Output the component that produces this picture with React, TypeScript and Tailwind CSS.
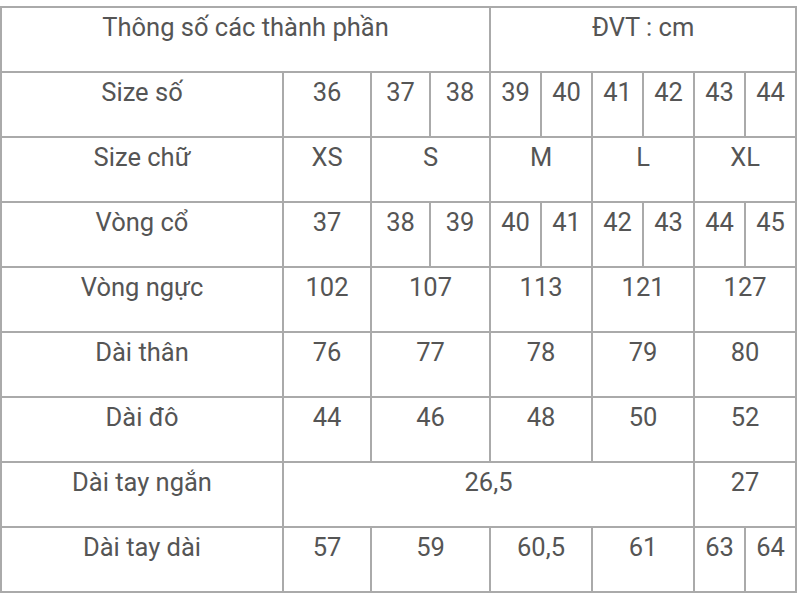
const cell =
  "border-2 border-[#aaaaaa] align-top pt-[1px] text-center leading-[36px] font-normal";

type Cell = [string, number];

const rows: { label: string; cells: Cell[] }[] = [
  {
    label: "Size số",
    cells: [["36", 1], ["37", 1], ["38", 1], ["39", 1], ["40", 1], ["41", 1], ["42", 1], ["43", 1], ["44", 1]],
  },
  { label: "Size chữ", cells: [["XS", 1], ["S", 2], ["M", 2], ["L", 2], ["XL", 2]] },
  {
    label: "Vòng cổ",
    cells: [["37", 1], ["38", 1], ["39", 1], ["40", 1], ["41", 1], ["42", 1], ["43", 1], ["44", 1], ["45", 1]],
  },
  { label: "Vòng ngực", cells: [["102", 1], ["107", 2], ["113", 2], ["121", 2], ["127", 2]] },
  { label: "Dài thân", cells: [["76", 1], ["77", 2], ["78", 2], ["79", 2], ["80", 2]] },
  { label: "Dài đô", cells: [["44", 1], ["46", 2], ["48", 2], ["50", 2], ["52", 2]] },
  { label: "Dài tay ngắn", cells: [["26,5", 7], ["27", 2]] },
  { label: "Dài tay dài", cells: [["57", 1], ["59", 2], ["60,5", 2], ["61", 2], ["63", 1], ["64", 1]] },
];

const widths = [282, 88, 59, 60, 51, 51, 51, 51, 51, 51];

export default function App() {
  return (
    <div
      className="w-[800px] h-[600px] bg-white pt-[6px] text-[25.5px] text-[#555555]"
      style={{ fontFamily: "Roboto, 'Liberation Sans', sans-serif" }}
    >
      <table className="table-fixed border-collapse w-[795px]">
        <colgroup>
          {widths.map((w, i) => (
            <col key={i} style={{ width: w }} />
          ))}
        </colgroup>
        <tbody>
          <tr className="h-[65px]">
            <td colSpan={4} className={cell}>
              Thông số các thành phần
            </td>
            <td colSpan={6} className={cell}>
              ĐVT : cm
            </td>
          </tr>
          {rows.map((r) => (
            <tr key={r.label} className="h-[65px]">
              <td className={cell}>{r.label}</td>
              {r.cells.map(([v, span], i) => (
                <td key={i} colSpan={span} className={cell}>
                  {v}
                </td>
              ))}
            </tr>
          ))}
        </tbody>
      </table>
    </div>
  );
}
